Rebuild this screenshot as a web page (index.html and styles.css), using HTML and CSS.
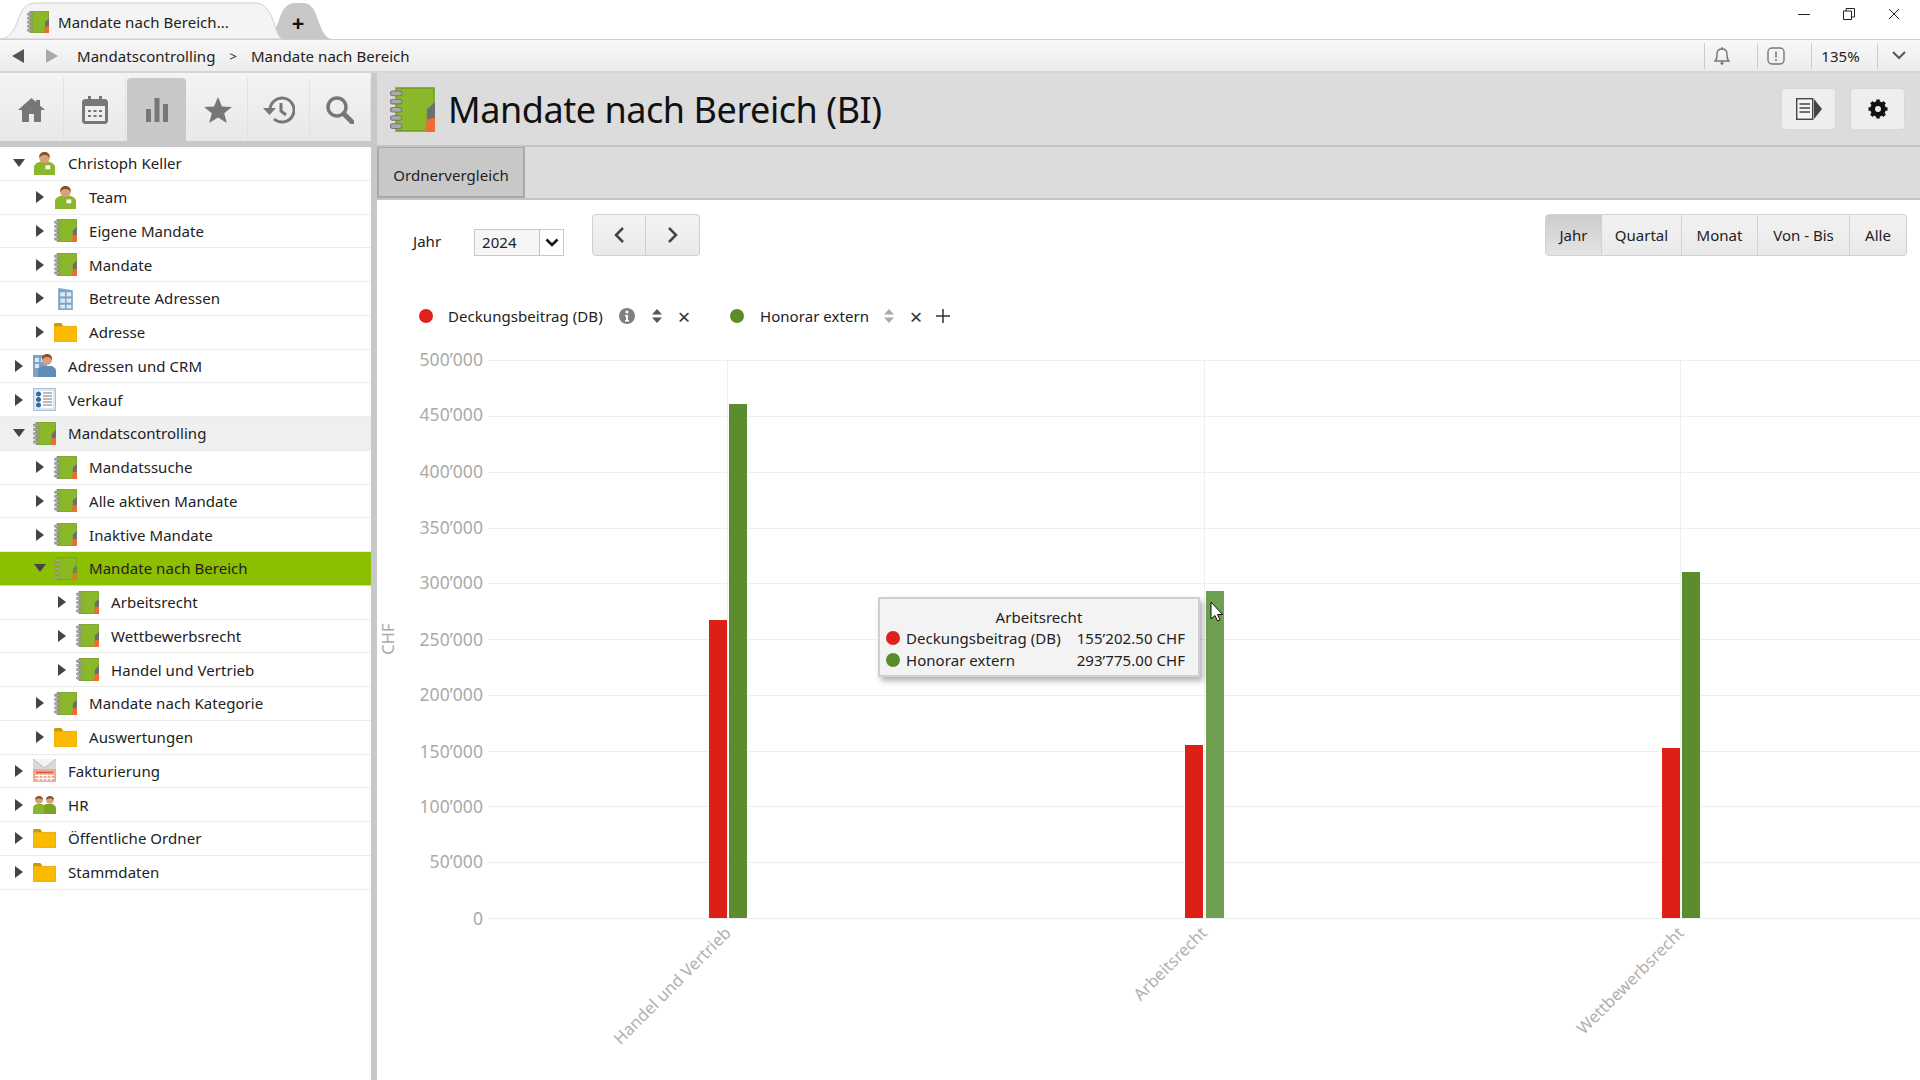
FILE: index.html
```html
<!DOCTYPE html>
<html lang="de">
<head>
    <meta charset="UTF-8">
    <title>Mandate nach Bereich</title>
    <link rel="stylesheet" href="styles.css">
</head>
<body>
<svg class="defs" width="0" height="0">
    <symbol id="i-book" viewBox="0 0 44 44">
        <rect x="6" y="1" width="37" height="42" fill="#8ab82a" stroke="#6f9a1e" stroke-width="1.5"/>
        <polygon points="44,15 36,22 36,32 44,30" fill="#6e6e6e"/>
        <polygon points="36,32 44,30 44,44 34,44" fill="#ee6b33"/>
        <g fill="#aaa" stroke="#777" stroke-width="1">
            <rect x="0.5" y="4" width="11" height="4.5" rx="2.2"/>
            <rect x="0.5" y="12" width="11" height="4.5" rx="2.2"/>
            <rect x="0.5" y="20" width="11" height="4.5" rx="2.2"/>
            <rect x="0.5" y="28" width="11" height="4.5" rx="2.2"/>
            <rect x="0.5" y="36" width="11" height="4.5" rx="2.2"/>
        </g>
    </symbol>
    <symbol id="i-person" viewBox="0 0 22 24">
        <path d="M0 24v-8c0-3 3-5 7-6h8c4 1 7 3 7 6v8z" fill="#8ab82a"/>
        <circle cx="11" cy="6" r="5.500" fill="#d9a07c"/>
        <path d="M5.500 6C5 2 8 0 11 0s6 2 5.500 6C15 3.500 13 3 11 3S7 3.500 5.500 6z" fill="#8a4f28"/>
        <rect x="12" y="14" width="5" height="4" fill="#fff"/>
    </symbol>
    <symbol id="i-building" viewBox="0 0 22 22">
        <path d="M4 1l14 2v19H4z" fill="#7da3c8"/>
        <g fill="#dfe9f3">
            <rect x="6" y="5" width="4.500" height="4"/><rect x="12" y="5" width="4.500" height="4"/>
            <rect x="6" y="11" width="4.500" height="4"/><rect x="12" y="11" width="4.500" height="4"/>
            <rect x="6" y="17" width="4.500" height="3.500"/><rect x="12" y="17" width="4.500" height="3.500"/>
        </g>
    </symbol>
    <symbol id="i-folder" viewBox="0 0 22 18">
        <path d="M0 3V1.500C0 .5.500 0 1.500 0H7l2 3z" fill="#c9960f"/>
        <rect x="0" y="3" width="22" height="15" fill="#fbb900" stroke="#d9a20a" stroke-width=".6"/>
    </symbol>
    <symbol id="i-crm" viewBox="0 0 23 23">
        <rect x="0" y="1" width="14" height="22" fill="#7da3c8"/>
        <g fill="#dfe9f3">
            <rect x="2" y="4" width="4" height="4"/><rect x="8" y="4" width="4" height="4"/>
            <rect x="2" y="10" width="4" height="4"/>
        </g>
        <path d="M5 23v-6c0-3 3-5 6-5h6c3 0 6 2 6 5v6z" fill="#5f8db5"/>
        <circle cx="14" cy="6" r="5" fill="#d9a07c"/>
        <path d="M9 6c-.5-4 2-6 5-6s5.500 2 5 6c-1-2-3-3-5-3s-4 1-5 3z" fill="#8a4f28"/>
    </symbol>
    <symbol id="i-list" viewBox="0 0 23 23">
        <rect x=".5" y=".5" width="22" height="22" fill="#dbe6f0" stroke="#a9c0d6"/>
        <rect x="3" y="3" width="17" height="17" fill="#fff"/>
        <circle cx="5.500" cy="6" r="2.500" fill="#2f6aa3"/>
        <circle cx="5.500" cy="11.500" r="2.500" fill="#2f6aa3"/>
        <circle cx="5.500" cy="17" r="2.500" fill="#2f6aa3"/>
        <path d="M10 5h9M10 8h9M10 11h9M10 14h9M10 17h9" stroke="#777" stroke-width="1"/>
    </symbol>
    <symbol id="i-invoice" viewBox="0 0 23 23">
        <rect x="0" y="0" width="23" height="12" fill="#d9d9d9"/>
        <path d="M0 0l11.500 9L23 0" fill="#f3f3f3" stroke="#bbb"/>
        <rect x="0" y="10" width="23" height="13" fill="#f6a98c"/>
        <path d="M3 13.500h17" stroke="#d9534f" stroke-width="1.500"/>
        <path d="M2 16.500h19M2 19.500h19M6 15v7M10 15v7M14 15v7M18 15v7" stroke="#fff" stroke-width="1.200"/>
    </symbol>
    <symbol id="i-team" viewBox="0 0 23 18">
        <path d="M0 18v-6c0-2 2-4 5-4h3c1 0 2 .5 3 1v9z" fill="#8ab82a"/>
        <path d="M11 18V9c1-.5 2-1 4-1h3c3 0 5 2 5 4v6z" fill="#7aa524"/>
        <circle cx="6" cy="4" r="3.800" fill="#d9a07c"/>
        <circle cx="17" cy="4" r="3.800" fill="#d9a07c"/>
        <path d="M2 4c0-3 2-4 4-4s4 1 4 4C8 2 4 2 2 4zM13 4c0-3 2-4 4-4s4 1 4 4c-2-2-6-2-8 0z" fill="#8a4f28"/>
    </symbol>
    <symbol id="i-caret" viewBox="0 0 8 12"><path d="M0 0l8 6-8 6z" fill="#444"/></symbol>
    <symbol id="i-caret-down" viewBox="0 0 12 8"><path d="M0 0h12L6 8z" fill="#444"/></symbol>
    <symbol id="i-sort" viewBox="0 0 10 14"><path d="M5 0l5 5.500H0zM5 14L0 8.500h10z"/></symbol>
</svg>

<header class="tabstrip">
    <svg class="tab-shapes" width="340" height="39" viewBox="0 0 340 39">
        <path d="M262 39c10 0 14-10 18-22 3-9 8-14 15-14h8c7 0 11 5 14 14 4 12 8 22 15 22z" fill="#c8c8c8"/>
        <path d="M0 39c8 0 14-7 18-19 3-10 8-17 18-17h219c9 0 14 7 18 17 3 9 6 19 10 19z" fill="#f4f4f4" stroke="#cfcfcf"/>
    </svg>
    <div class="tab-label">
        <svg class="icon-md"><use href="#i-book"/></svg>
        <span>Mandate nach Bereich...</span>
    </div>
    <span class="tab-add">+</span>
    <div class="window-controls">
        <svg width="12" height="12" viewBox="0 0 12 12"><path d="M0 6.500h12" stroke="#222"/></svg>
        <svg width="12" height="12" viewBox="0 0 12 12"><path d="M.5 3h8v8.500h-8zM3 3V.5h8.500V9H9" fill="none" stroke="#222"/></svg>
        <svg width="12" height="12" viewBox="0 0 12 12"><path d="M1 1l10 10M11 1L1 11" stroke="#222"/></svg>
    </div>
</header>

<nav class="addressbar">
    <svg class="nav-arrow" width="12" height="14" viewBox="0 0 12 14"><path d="M12 0v14L0 7z" fill="#555"/></svg>
    <svg class="nav-arrow nav-arrow-next" width="12" height="14" viewBox="0 0 12 14"><path d="M0 0v14l12-7z" fill="#aaa"/></svg>
    <span class="crumb">Mandatscontrolling</span>
    <span class="crumb-sep">&gt;</span>
    <span class="crumb">Mandate nach Bereich</span>
    <div class="address-tools">
        <span class="tool-cell tool-bell">
            <svg width="16" height="18" viewBox="0 0 16 18"><path d="M1 14h14c-2-2-2-3-2-7 0-3-2-5-5-5S3 4 3 7c0 4 0 5-2 7z" fill="none" stroke="#777" stroke-width="1.400"/><circle cx="8" cy="16.200" r="1.500" fill="#777"/><circle cx="8" cy="1.300" r="1.100" fill="#777"/></svg>
        </span>
        <span class="tool-cell tool-alert">
            <svg width="18" height="18" viewBox="0 0 18 18"><rect x="1" y="1" width="16" height="16" rx="4" fill="none" stroke="#777" stroke-width="1.400"/><path d="M9 4.500v6" stroke="#777" stroke-width="1.600"/><circle cx="9" cy="13" r="1" fill="#777"/></svg>
        </span>
        <span class="tool-cell tool-zoom">135%</span>
        <span class="tool-cell tool-more">
            <svg width="14" height="9" viewBox="0 0 14 9"><path d="M1 1l6 6 6-6" fill="none" stroke="#555" stroke-width="2"/></svg>
        </span>
    </div>
</nav>

<div class="workspace">
    <aside class="sidebar">
        <div class="iconbar">
            <span class="iconbar-item">
                <svg width="27" height="24" viewBox="0 0 27 24"><path d="M13.500 0L0 12h4v12h7v-8h5v8h7V12h4l-5-4.500V2h-4v2z" fill="#777"/></svg>
            </span>
            <span class="iconbar-item">
                <svg width="26" height="28" viewBox="0 0 26 28"><path d="M3 3h3V0h3v3h8V0h3v3h3c1.500 0 3 1.500 3 3v19c0 1.500-1.500 3-3 3H3c-1.500 0-3-1.500-3-3V6c0-1.500 1.500-3 3-3z" fill="#777"/><rect x="3" y="10" width="20" height="15" fill="#eee"/><path d="M6 14h3v2H6zM11.500 14h3v2h-3zM17 14h3v2h-3zM6 19h3v2H6zM11.500 19h3v2h-3zM17 19h3v2h-3z" fill="#777"/></svg>
            </span>
            <span class="iconbar-item is-active">
                <svg width="22" height="24" viewBox="0 0 22 24"><path d="M0 11h5v13H0zM8.500 0h5v24h-5zM17 6h5v18h-5z" fill="#777"/></svg>
            </span>
            <span class="iconbar-item">
                <svg width="28" height="26" viewBox="0 0 28 26"><path d="M14 0l4 9.500 10 .5-7.800 6.200 2.700 9.800L14 20.500 5.100 26l2.700-9.800L0 10l10-.5z" fill="#777"/></svg>
            </span>
            <span class="iconbar-item">
                <svg width="32" height="28" viewBox="0 0 32 28"><path d="M7 14a12 12 0 1 1 4 9" fill="none" stroke="#777" stroke-width="3"/><path d="M0 12h13l-6.500 7z" fill="#777"/><path d="M18 7v8l5 4" fill="none" stroke="#777" stroke-width="3"/></svg>
            </span>
            <span class="iconbar-item">
                <svg width="28" height="28" viewBox="0 0 28 28"><circle cx="11" cy="11" r="9" fill="none" stroke="#777" stroke-width="3.500"/><path d="M18 18l8 8" stroke="#777" stroke-width="5" stroke-linecap="round"/></svg>
            </span>
        </div>
        <ul class="tree">
            <li class="row lvl0"><svg class="caret-down"><use href="#i-caret-down"/></svg><svg class="icon-sm"><use href="#i-person"/></svg><span>Christoph Keller</span></li>
            <li class="row lvl1"><svg class="caret"><use href="#i-caret"/></svg><svg class="icon-sm"><use href="#i-person"/></svg><span>Team</span></li>
            <li class="row lvl1"><svg class="caret"><use href="#i-caret"/></svg><svg class="icon-sm"><use href="#i-book"/></svg><span>Eigene Mandate</span></li>
            <li class="row lvl1"><svg class="caret"><use href="#i-caret"/></svg><svg class="icon-sm"><use href="#i-book"/></svg><span>Mandate</span></li>
            <li class="row lvl1"><svg class="caret"><use href="#i-caret"/></svg><svg class="icon-sm"><use href="#i-building"/></svg><span>Betreute Adressen</span></li>
            <li class="row lvl1"><svg class="caret"><use href="#i-caret"/></svg><svg class="icon-folder"><use href="#i-folder"/></svg><span>Adresse</span></li>
            <li class="row lvl0"><svg class="caret"><use href="#i-caret"/></svg><svg class="icon-sm"><use href="#i-crm"/></svg><span>Adressen und CRM</span></li>
            <li class="row lvl0"><svg class="caret"><use href="#i-caret"/></svg><svg class="icon-sm"><use href="#i-list"/></svg><span>Verkauf</span></li>
            <li class="row lvl0 is-open"><svg class="caret-down"><use href="#i-caret-down"/></svg><svg class="icon-sm"><use href="#i-book"/></svg><span>Mandatscontrolling</span></li>
            <li class="row lvl1"><svg class="caret"><use href="#i-caret"/></svg><svg class="icon-sm"><use href="#i-book"/></svg><span>Mandatssuche</span></li>
            <li class="row lvl1"><svg class="caret"><use href="#i-caret"/></svg><svg class="icon-sm"><use href="#i-book"/></svg><span>Alle aktiven Mandate</span></li>
            <li class="row lvl1"><svg class="caret"><use href="#i-caret"/></svg><svg class="icon-sm"><use href="#i-book"/></svg><span>Inaktive Mandate</span></li>
            <li class="row lvl1 is-selected"><svg class="caret-down"><use href="#i-caret-down"/></svg><svg class="icon-sm"><use href="#i-book"/></svg><span>Mandate nach Bereich</span></li>
            <li class="row lvl2"><svg class="caret"><use href="#i-caret"/></svg><svg class="icon-sm"><use href="#i-book"/></svg><span>Arbeitsrecht</span></li>
            <li class="row lvl2"><svg class="caret"><use href="#i-caret"/></svg><svg class="icon-sm"><use href="#i-book"/></svg><span>Wettbewerbsrecht</span></li>
            <li class="row lvl2"><svg class="caret"><use href="#i-caret"/></svg><svg class="icon-sm"><use href="#i-book"/></svg><span>Handel und Vertrieb</span></li>
            <li class="row lvl1"><svg class="caret"><use href="#i-caret"/></svg><svg class="icon-sm"><use href="#i-book"/></svg><span>Mandate nach Kategorie</span></li>
            <li class="row lvl1"><svg class="caret"><use href="#i-caret"/></svg><svg class="icon-folder"><use href="#i-folder"/></svg><span>Auswertungen</span></li>
            <li class="row lvl0"><svg class="caret"><use href="#i-caret"/></svg><svg class="icon-sm"><use href="#i-invoice"/></svg><span>Fakturierung</span></li>
            <li class="row lvl0"><svg class="caret"><use href="#i-caret"/></svg><svg class="icon-team"><use href="#i-team"/></svg><span>HR</span></li>
            <li class="row lvl0"><svg class="caret"><use href="#i-caret"/></svg><svg class="icon-folder"><use href="#i-folder"/></svg><span>Öffentliche Ordner</span></li>
            <li class="row lvl0"><svg class="caret"><use href="#i-caret"/></svg><svg class="icon-folder"><use href="#i-folder"/></svg><span>Stammdaten</span></li>
        </ul>
    </aside>

    <main class="content">
        <div class="page-head">
            <svg class="icon-lg"><use href="#i-book"/></svg>
            <h1>Mandate nach Bereich (BI)</h1>
            <div class="head-actions">
                <button class="head-btn">
                    <svg width="26" height="22" viewBox="0 0 26 22"><rect x=".7" y=".7" width="16" height="20.600" fill="#f4f4f4" stroke="#444" stroke-width="1.400"/><path d="M3.500 6h10.500M3.500 10h10.500M3.500 14h10.500" stroke="#444" stroke-width="1.400"/><path d="M18 1l8 10-8 10z" fill="#444"/></svg>
                </button>
                <button class="head-btn">
                    <svg width="20" height="20" viewBox="0 0 20 20"><circle cx="10" cy="10" r="5.500" fill="none" stroke="#111" stroke-width="4.500"/><path d="M10 10V.5M10 10v9.500M10 10H.5M10 10h9.500M10 10L3.300 3.300M10 10l6.700 6.700M10 10l6.700-6.700M10 10l-6.700 6.700" stroke="#111" stroke-width="3.500"/><circle cx="10" cy="10" r="3" fill="#eee"/></svg>
                </button>
            </div>
        </div>
        <div class="tabrow">
            <span class="subtab">Ordnervergleich</span>
        </div>

        <div class="toolbar">
            <label class="year-label">Jahr</label>
            <div class="year-select">
                <span class="year-value">2024</span>
                <span class="year-arrow">
                    <svg width="14" height="9" viewBox="0 0 14 9"><path d="M1.500 1.500L7 7l5.500-5.500" fill="none" stroke="#111" stroke-width="2.500"/></svg>
                </span>
            </div>
            <div class="year-nav">
                <button><svg width="12" height="18" viewBox="0 0 12 18"><path d="M10 2L3 9l7 7" fill="none" stroke="#444" stroke-width="2.500"/></svg></button>
                <button><svg width="12" height="18" viewBox="0 0 12 18"><path d="M2 2l7 7-7 7" fill="none" stroke="#444" stroke-width="2.500"/></svg></button>
            </div>
            <div class="range">
                <button class="is-active">Jahr</button>
                <button>Quartal</button>
                <button>Monat</button>
                <button>Von - Bis</button>
                <button>Alle</button>
            </div>
        </div>

        <div class="legend">
            <span class="dot dot-red"></span>
            <span class="legend-text">Deckungsbeitrag (DB)</span>
            <svg class="legend-info" width="16" height="16" viewBox="0 0 16 16"><circle cx="8" cy="8" r="8" fill="#808080"/><circle cx="8" cy="4" r="1.500" fill="#fff"/><path d="M6 7h3v5h1v1.500H6V12h1V8.500H6z" fill="#fff"/></svg>
            <svg class="legend-sort sort-down" width="10" height="14"><use href="#i-sort"/></svg>
            <span class="legend-x legend-x-gap">×</span>
            <span class="dot dot-green"></span>
            <span class="legend-text legend-text-short">Honorar extern</span>
            <svg class="legend-sort legend-sort-plain" width="10" height="14"><use href="#i-sort"/></svg>
            <span class="legend-x">×</span>
            <svg class="legend-plus" width="14" height="14" viewBox="0 0 14 14"><path d="M7 0v14M0 7h14" stroke="#333" stroke-width="1.500"/></svg>
        </div>

        <svg class="chart" viewBox="377 340 1543 740" width="1543" height="740">
            <g class="grid">
                <path d="M488 360.500H1920M488 416.500H1920M488 472.500H1920M488 528.500H1920M488 583.500H1920M488 639.500H1920M488 695.500H1920M488 751.500H1920M488 806.500H1920M488 862.500H1920M488 918.500H1920"/>
                <path d="M727.500 360V918M1204.500 360V918M1680.500 360V918"/>
            </g>
            <g class="y-labels">
                <text x="483" y="366">500’000</text>
                <text x="483" y="421">450’000</text>
                <text x="483" y="478">400’000</text>
                <text x="483" y="534">350’000</text>
                <text x="483" y="589">300’000</text>
                <text x="483" y="646">250’000</text>
                <text x="483" y="701">200’000</text>
                <text x="483" y="758">150’000</text>
                <text x="483" y="813">100’000</text>
                <text x="483" y="868">50’000</text>
                <text x="483" y="925">0</text>
            </g>
            <text class="y-title" transform="translate(394 639) rotate(-90)">CHF</text>
            <rect class="bar-red" x="709" y="620" width="18" height="298"/>
            <rect class="bar-green" x="729" y="404" width="18" height="514"/>
            <rect class="bar-red" x="1185" y="745" width="18" height="173"/>
            <rect class="bar-hover" x="1206" y="591" width="18" height="327"/>
            <rect class="bar-red" x="1662" y="748" width="18" height="170"/>
            <rect class="bar-green" x="1682" y="572" width="18" height="346"/>
            <g class="x-labels">
                <text transform="translate(732 934) rotate(-45)">Handel und Vertrieb</text>
                <text transform="translate(1208 934) rotate(-45)">Arbeitsrecht</text>
                <text transform="translate(1685 934) rotate(-45)">Wettbewerbsrecht</text>
            </g>
            <path class="cursor" d="M1211 602v17l4-3.500 2.500 5.500 2.500-1-2.500-5.500 5 0z"/>
        </svg>

        <div class="tooltip">
            <div class="tooltip-title">Arbeitsrecht</div>
            <span class="dot dot-red"></span><span>Deckungsbeitrag (DB)</span><span class="tooltip-value">155’202.50 CHF</span>
            <span class="dot dot-green"></span><span>Honorar extern</span><span class="tooltip-value">293’775.00 CHF</span>
        </div>
    </main>
</div>
</body>
</html>
```

FILE: styles.css
```css
* {
    box-sizing: border-box;
}

html, body {
    margin: 0;
    height: 1080px;
    overflow: hidden;
}

body {
    font-family: "Noto Sans", "Open Sans", sans-serif;
    font-size: 15px;
    letter-spacing: 0.05px;
    color: #222;
    background: #fff;
}

.defs {
    position: absolute;
}

button {
    font: inherit;
    color: inherit;
}

/* window tabs */
.tabstrip {
    position: relative;
    display: flex;
    align-items: center;
    height: 39px;
    background: #fff;
}

.tab-shapes {
    position: absolute;
    left: 0;
    top: 0;
}

.tab-label {
    position: relative;
    display: flex;
    align-items: center;
    gap: 9px;
    margin-left: 27px;
    width: 261px;
    padding-top: 4px;
}

.icon-md {
    width: 22px;
    height: 22px;
}

.tab-add {
    position: relative;
    width: 20px;
    text-align: center;
    font-size: 22px;
    font-weight: 700;
    color: #111;
    padding-top: 4px;
}

.window-controls {
    margin-left: auto;
    display: flex;
    gap: 33px;
    padding: 0 20px 12px 0;
}

/* address bar */
.addressbar {
    display: flex;
    align-items: center;
    height: 34px;
    padding-left: 12px;
    background: linear-gradient(#f8f8f8, #ececec);
    border-top: 1px solid #cfcfcf;
    border-bottom: 2px solid #d6d6d6;
}

.nav-arrow-next {
    margin-left: 22px;
}

.crumb:first-of-type {
    margin-left: 19px;
}

.crumb-sep {
    margin: 0 14px;
    font-size: 13px;
}

.address-tools {
    margin-left: auto;
    display: flex;
    align-items: center;
    height: 100%;
}

.tool-cell {
    display: flex;
    align-items: center;
    justify-content: center;
    height: 26px;
    border-left: 1px solid #ccc;
}

.tool-bell {
    width: 53px;
    padding-right: 18px;
}

.tool-alert {
    width: 54px;
    padding-right: 18px;
}

.tool-zoom {
    width: 66px;
    padding-right: 8px;
}

.tool-more {
    width: 43px;
}

/* main split */
.workspace {
    display: flex;
    height: 1007px;
}

.sidebar {
    flex: none;
    width: 377px;
    border-right: 6px solid #c8c8c8;
}

.iconbar {
    display: grid;
    grid-template-columns: 64px 62px 62px 60px 62px 61px;
    height: 74px;
    padding-top: 5px;
    background: linear-gradient(#f4f4f4, #e8e8e8);
    border-bottom: 6px solid #c8c8c8;
}

.iconbar-item {
    display: flex;
    align-items: center;
    justify-content: center;
    border-right: 1px solid #e2e2e2;
}

.iconbar-item.is-active {
    background: #c8c8c8;
    border-radius: 4px 4px 0 0;
    margin: 0 2px 0 1px;
    border-right: 0;
}

.tree {
    list-style: none;
    margin: 0;
    padding: 0;
}

.row {
    display: flex;
    align-items: center;
    height: 33.76px;
    border-bottom: 1px solid #ececec;
    white-space: nowrap;
}

.lvl0 {
    padding-left: 13px;
}

.lvl1 {
    padding-left: 34px;
}

.lvl2 {
    padding-left: 56px;
}

.caret {
    flex: none;
    width: 8px;
    height: 12px;
    margin: 0 2px;
}

.caret-down {
    flex: none;
    width: 12px;
    height: 8px;
}

.icon-sm {
    flex: none;
    width: 23px;
    height: 23px;
    margin-left: 8px;
    margin-right: 12px;
}

.icon-folder {
    flex: none;
    width: 23px;
    height: 19px;
    margin-left: 8px;
    margin-right: 12px;
}

.icon-team {
    flex: none;
    width: 23px;
    height: 18px;
    margin-left: 8px;
    margin-right: 12px;
}

.is-open {
    background: #efefef;
}

.is-selected {
    background: #8cbf00;
    border-bottom-color: #c8e08a;
}

.is-selected .icon-sm {
    opacity: 0.75;
}

/* content */
.content {
    position: relative;
    flex: 1;
    min-width: 0;
}

.page-head {
    display: flex;
    align-items: center;
    height: 74px;
    padding: 0 15px 0 13px;
    background: #dcdcdc;
    border-bottom: 2px solid #c4c4c4;
}

.icon-lg {
    width: 45px;
    height: 45px;
}

.page-head h1 {
    margin: 0 0 0 13px;
    font-size: 36px;
    font-weight: 400;
    letter-spacing: -0.45px;
    color: #111;
}

.head-actions {
    margin-left: auto;
    display: flex;
    gap: 14px;
}

.head-btn {
    display: flex;
    align-items: center;
    justify-content: center;
    width: 55px;
    height: 42px;
    background: #eee;
    border: 1px solid #d8d8d8;
    border-radius: 4px;
}

.tabrow {
    height: 53px;
    background: #dcdcdc;
    border-bottom: 2px solid #c4c4c4;
}

.subtab {
    display: flex;
    align-items: center;
    justify-content: center;
    width: 148px;
    height: 100%;
    padding-top: 5px;
    background: #c8c8c8;
    border: 2px solid #a9a9a9;
    border-top-width: 1px;
}

.toolbar {
    display: flex;
    align-items: flex-start;
    padding: 14px 13px 0 36px;
    height: 56px;
}

.year-label {
    width: 61px;
    margin-top: 17px;
}

.year-select {
    display: flex;
    align-items: center;
    justify-content: space-between;
    width: 90px;
    height: 27px;
    margin-top: 15px;
    padding-left: 7px;
    background: #f6f6f6;
    border: 1px solid #c8c8c8;
}

.year-value {
    padding-bottom: 2px;
}

.year-arrow {
    display: flex;
    align-items: center;
    justify-content: center;
    width: 24px;
    height: 100%;
    background: #fff;
    border-left: 1px solid #c0c0c0;
}

.year-nav {
    display: flex;
    margin-left: 28px;
}

.year-nav button {
    display: flex;
    align-items: center;
    justify-content: center;
    width: 54px;
    height: 42px;
    background: linear-gradient(#f4f4f4, #e9e9e9);
    border: 1px solid #cfcfcf;
    padding: 0;
}

.year-nav button:first-child {
    border-radius: 4px 0 0 4px;
}

.year-nav button:last-child {
    border-left: 0;
    border-radius: 0 4px 4px 0;
}

.range {
    margin-left: auto;
    display: grid;
    grid-template-columns: 57px 80px 76px 92px 57px;
    height: 42px;
}

.range button {
    padding: 0;
    background: linear-gradient(#f2f2f2, #e9e9e9);
    border: 1px solid #d2d2d2;
    border-left-width: 0;
}

.range button:first-child {
    border-left-width: 1px;
    border-radius: 4px 0 0 4px;
}

.range button:last-child {
    border-radius: 0 4px 4px 0;
}

.range .is-active {
    background: linear-gradient(#cccccc, #e4e4e4);
}

.legend {
    display: flex;
    align-items: center;
    height: 24px;
    margin-top: 48px;
    padding-left: 42px;
}

.dot {
    width: 14px;
    height: 14px;
    border-radius: 50%;
}

.dot-red {
    background: #e0201a;
}

.dot-green {
    background: #5b8c2a;
}

.legend-text {
    width: 171px;
    margin-left: 15px;
    font-size: 15px;
}

.legend-text-short {
    width: 124px;
    margin-left: 16px;
}

.legend-sort {
    margin-left: 17px;
    fill: #aaa;
}

.legend-sort-plain {
    margin-left: 0;
}

.sort-down {
    fill: #555;
}

.legend-x {
    display: flex;
    justify-content: center;
    width: 14px;
    margin-left: 15px;
    font-size: 22px;
    line-height: 1;
    color: #333;
}

.legend-x-gap {
    margin-right: 39px;
}

.legend-plus {
    margin-left: 13px;
}

.chart {
    display: block;
    margin-top: 12px;
}

.grid path {
    fill: none;
    stroke: #eeeeee;
    stroke-width: 1;
}

.y-labels text {
    text-anchor: end;
    font-size: 17.5px;
    fill: #aaa;
}

.y-title {
    text-anchor: middle;
    font-size: 16.5px;
    fill: #aaa;
}

.x-labels text {
    text-anchor: end;
    font-size: 16.5px;
    fill: #b0b0b0;
}

.bar-red {
    fill: #dd2017;
}

.bar-green {
    fill: #5b8c2e;
}

.bar-hover {
    fill: #6f9f50;
}

.cursor {
    fill: #fff;
    stroke: #111;
    stroke-width: 1;
}

/* hover box over the chart */
.tooltip {
    position: absolute;
    left: 501px;
    top: 524px;
    width: 322px;
    height: 80px;
    display: grid;
    grid-template-columns: 14px auto auto;
    grid-template-rows: 21px 22px 22px;
    column-gap: 6px;
    align-items: center;
    padding: 7px 13px 0 6px;
    font-size: 15px;
    background: #f3f3f3;
    border: 2px solid #cfcfcf;
    box-shadow: 3px 4px 6px rgba(0, 0, 0, 0.3);
}

.tooltip-title {
    grid-column: 1 / 4;
    padding-left: 7px;
    text-align: center;
}

.tooltip-value {
    text-align: right;
}
```
